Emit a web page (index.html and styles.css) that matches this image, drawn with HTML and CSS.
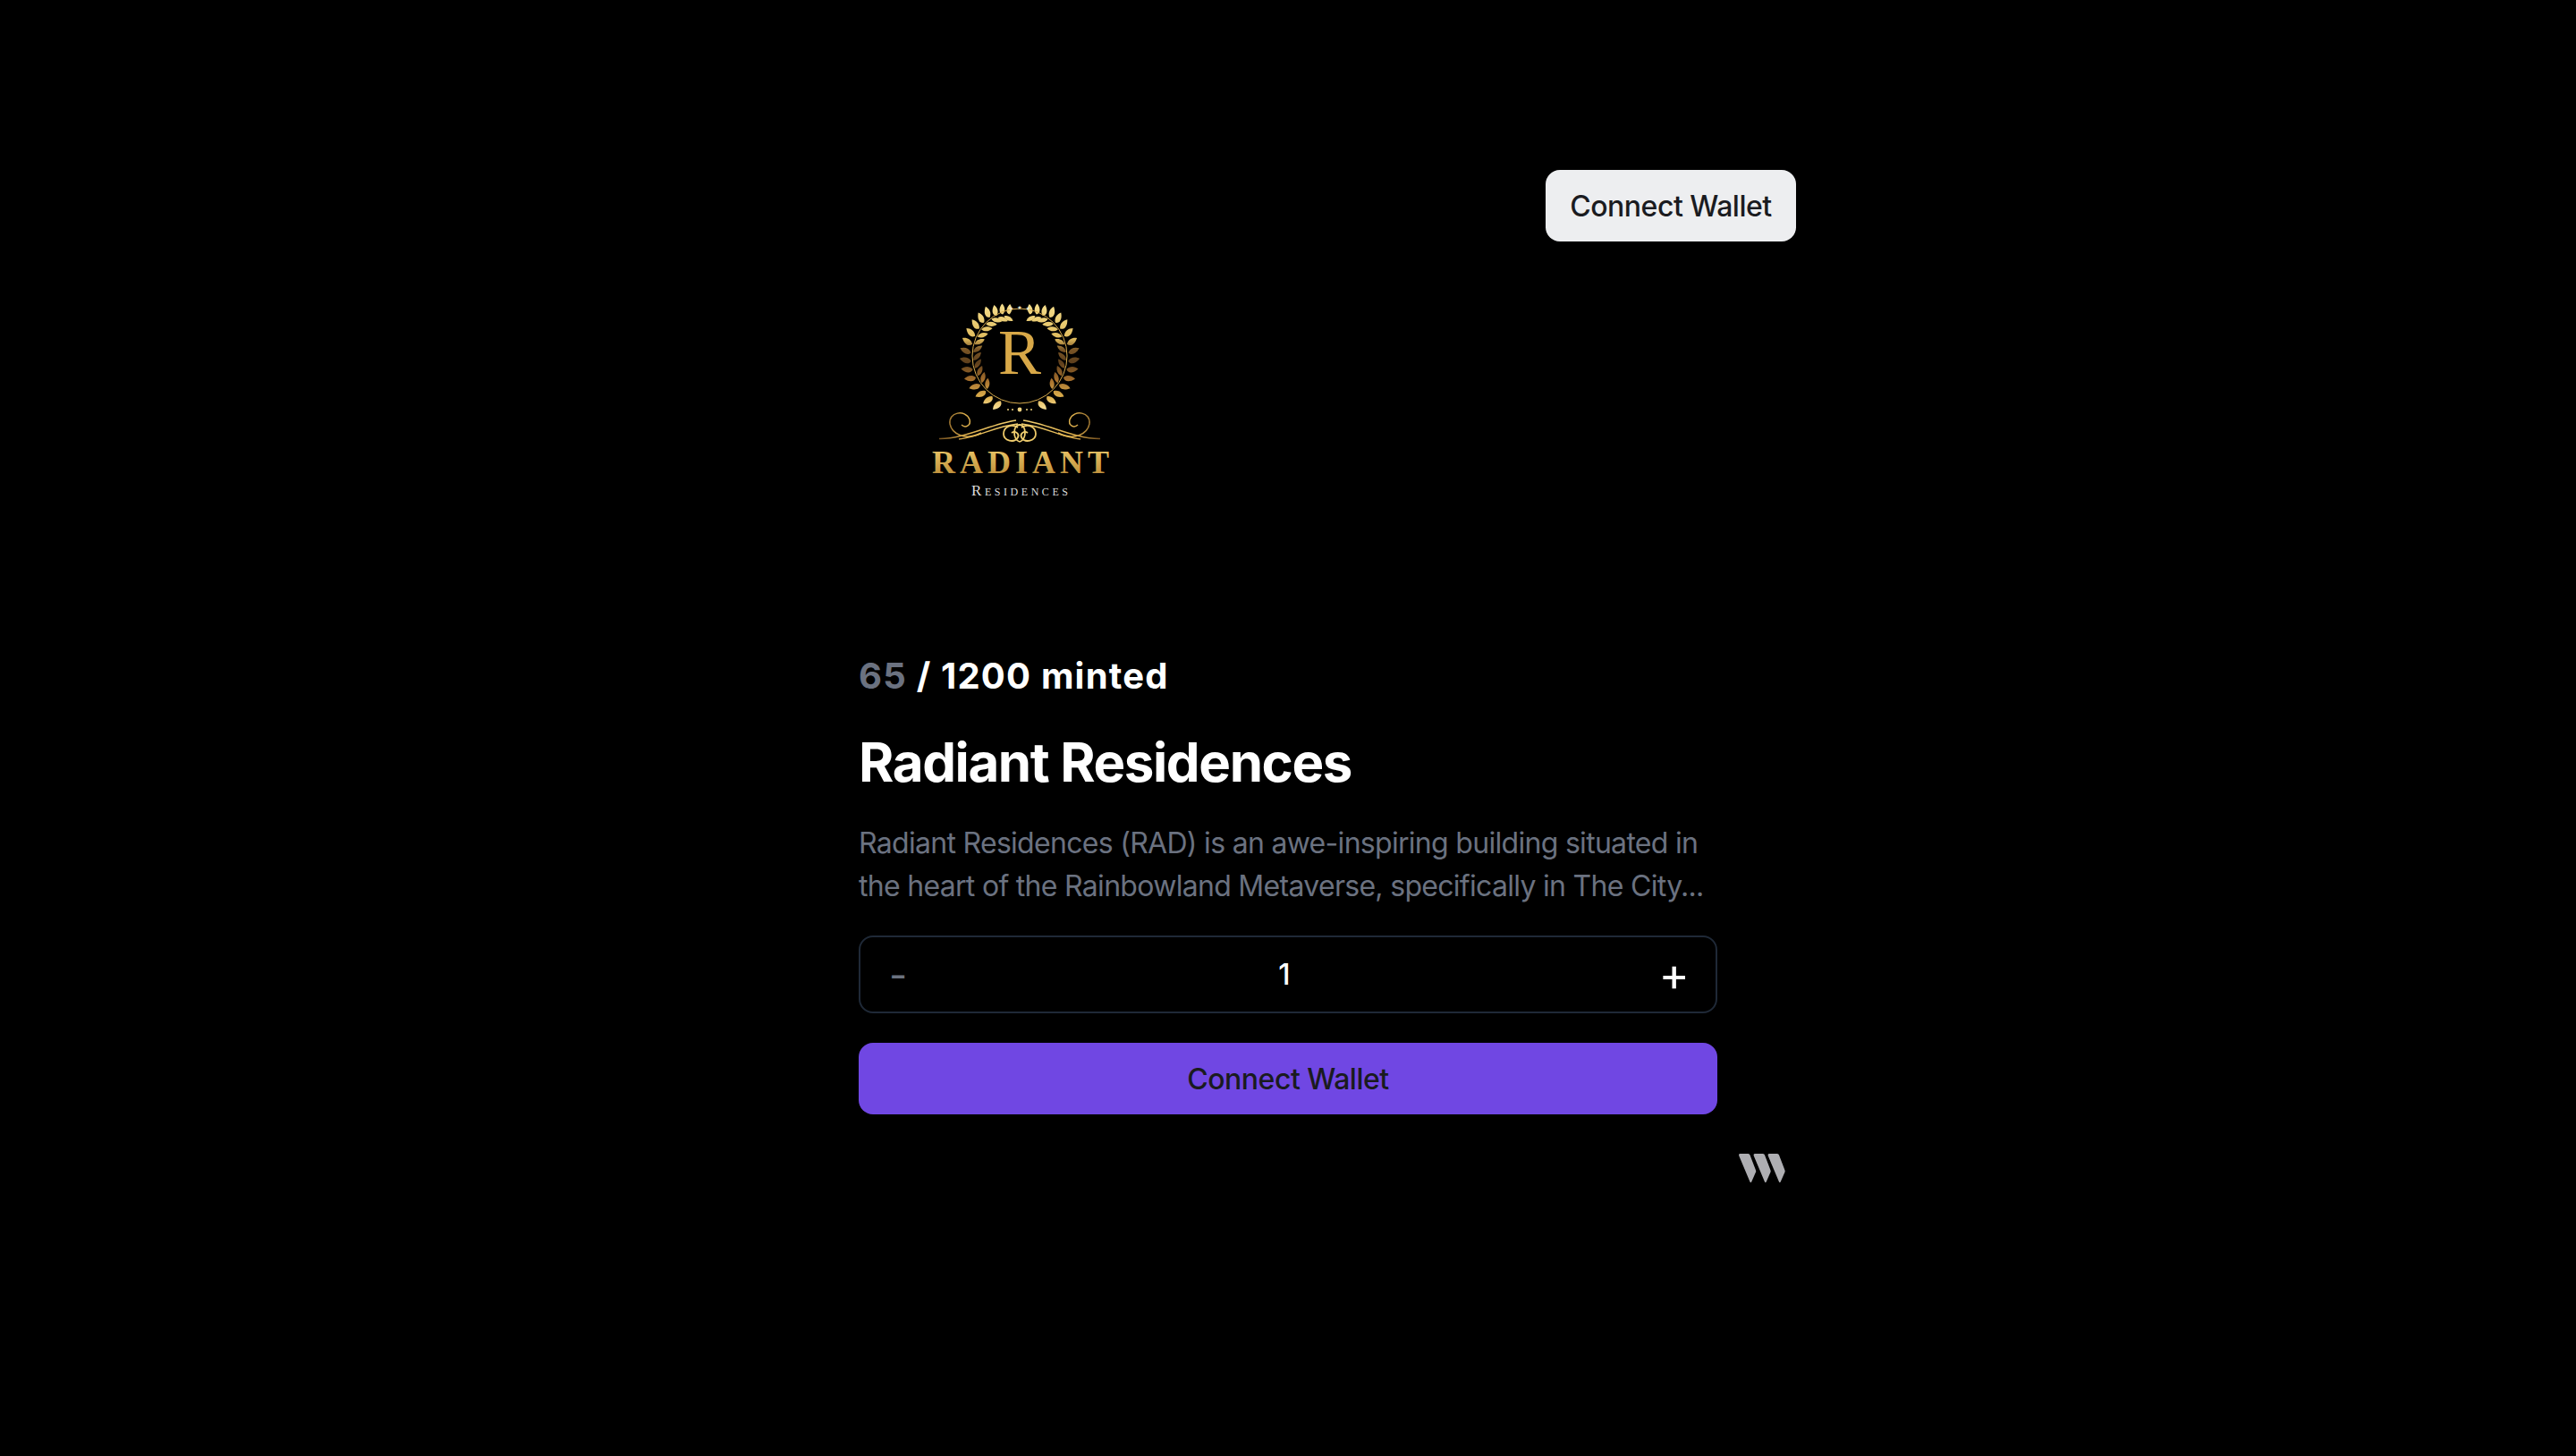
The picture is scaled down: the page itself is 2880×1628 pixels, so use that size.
FILE: index.html
```html
<!DOCTYPE html>
<html lang="en">
<head>
<meta charset="utf-8">
<title>Radiant Residences</title>
<link rel="stylesheet" href="styles.css">
</head>
<body>
<div class="page">
  <header class="topbar">
    <button class="wallet-btn">Connect Wallet</button>
  </header>
  <main class="claim">
    <svg class="logo" viewBox="0 0 360 360" width="360" height="360" role="img" aria-label="Radiant Residences logo">
      <defs>
        <linearGradient id="wreathGrad" gradientUnits="userSpaceOnUse" x1="0" y1="68" x2="0" y2="188">
          <stop offset="0" stop-color="#f6df8e"/>
          <stop offset=".34" stop-color="#e0bb5c"/>
          <stop offset=".44" stop-color="#7a5526"/>
          <stop offset=".56" stop-color="#5e3f1c"/>
          <stop offset=".72" stop-color="#a36d2c"/>
          <stop offset=".88" stop-color="#dcae4c"/>
          <stop offset="1" stop-color="#f8e29a"/>
        </linearGradient>
        <linearGradient id="flourishGrad" gradientUnits="userSpaceOnUse" x1="88" y1="0" x2="180" y2="0">
          <stop offset="0" stop-color="#6e4a1c"/>
          <stop offset=".35" stop-color="#dcae4c"/>
          <stop offset="1" stop-color="#f3d273"/>
        </linearGradient>
        <linearGradient id="wordGrad" gradientUnits="userSpaceOnUse" x1="0" y1="234" x2="0" y2="260">
          <stop offset="0" stop-color="#e6c264"/>
          <stop offset="1" stop-color="#c0913c"/>
        </linearGradient>
        <path id="outerLeaf" d="M0-54.500C-4-57.500-2.500-63 4-67 6-62.500 5-57 0-54.500Z"/>
        <path id="innerLeaf" d="M.5-52C5-52 8.500-48 8.500-42.500 3.500-43.500 .3-47 .5-52Z"/>
        <g id="leafPair"><use href="#outerLeaf"/><use href="#innerLeaf"/></g>
        <g id="branch">
          <use href="#outerLeaf" transform="rotate(-14) scale(.88)"/>
          <use href="#leafPair" transform="rotate(-22) scale(.92)"/>
          <use href="#leafPair" transform="rotate(-30) scale(.95)"/>
          <use href="#leafPair" transform="rotate(-38)"/>
          <use href="#leafPair" transform="rotate(-47)"/>
          <use href="#leafPair" transform="rotate(-56)"/>
          <use href="#leafPair" transform="rotate(-66)"/>
          <use href="#leafPair" transform="rotate(-76)"/>
          <use href="#leafPair" transform="rotate(-86)"/>
          <use href="#leafPair" transform="rotate(-96)"/>
          <use href="#leafPair" transform="rotate(-106)"/>
          <use href="#leafPair" transform="rotate(-116)"/>
          <use href="#leafPair" transform="rotate(-126)"/>
          <use href="#leafPair" transform="rotate(-136)"/>
          <use href="#outerLeaf" transform="rotate(-146)"/>
          <use href="#outerLeaf" transform="rotate(-157)"/>
        </g>
        <mask id="wreathMask" maskUnits="userSpaceOnUse" x="0" y="0" width="360" height="360">
          <g transform="translate(180 128)" fill="#fff">
            <use href="#branch"/>
            <use href="#branch" transform="scale(-1 1)"/>
          </g>
        </mask>
        <g id="flourishSide" fill="none" stroke="url(#flourishGrad)">
          <path stroke-width="1.600" d="M90 220.500C118 221 148 204 176 200"/>
          <path stroke-width="1.400" d="M112 221C135 219 150 207 178 204"/>
          <path stroke-width="1.500" d="M137 214C118 224 104 214 102 204C100 191 119 187 124 199C126 206 119 209 115 205"/>
          <path stroke-width="1.800" d="M178 208C170 203 162 208 162 215C162 223 174 226 178 219C180 215 175 211 171 214"/>
          <path stroke-width="1.800" d="M180 205C172 205 172 222 180 224"/>
        </g>
      </defs>
      <rect class="logo-wreath" width="360" height="360" mask="url(#wreathMask)"/>
      <circle class="logo-ring" cx="180" cy="128" r="53"/>
      <text class="logo-initial" x="180" y="148">R</text>
      <text class="logo-star" x="170.500" y="77">★</text>
      <text class="logo-star" x="180" y="76">★</text>
      <text class="logo-star" x="189.500" y="77">★</text>
      <g class="logo-dots">
        <circle cx="167" cy="188" r="1"/><circle cx="172" cy="188" r="1"/>
        <circle cx="180" cy="188" r="2.400"/>
        <circle cx="188" cy="188" r="1"/><circle cx="193" cy="188" r="1"/>
      </g>
      <use href="#flourishSide"/>
      <use href="#flourishSide" transform="translate(360 0) scale(-1 1)"/>
      <text class="logo-word" x="82" y="259" textLength="198" lengthAdjust="spacing">RADIANT</text>
      <text class="logo-sub" x="180" y="284" textLength="108" lengthAdjust="spacing">Residences</text>
    </svg>
    <p class="minted"><span class="minted-count">65</span> / 1200 minted</p>
    <h1 class="title">Radiant Residences</h1>
    <p class="desc">Radiant Residences (RAD) is an awe-inspiring building situated in the heart of the Rainbowland Metaverse, specifically in The City...</p>
    <div class="stepper">
      <button class="step step-minus">-</button>
      <span class="qty">1</span>
      <button class="step step-plus">+</button>
    </div>
    <button class="claim-btn">Connect Wallet</button>
  </main>
  <footer class="foot">
    <svg class="mark" viewBox="0 0 54 33" width="54" height="33" aria-hidden="true">
      <path id="markStrip" d="M1.500 0H10.500Q12 0 12.500 1.500L19 18.500Q19.500 20 18.800 21L14.200 31.500Q13.300 33 12.500 31.500L.3 2.500Q-.5 0 1.500 0Z"/>
      <use href="#markStrip" x="16.500"/>
      <use href="#markStrip" x="32.500"/>
    </svg>
  </footer>
</div>
</body>
</html>
```

FILE: styles.css
```css
* { box-sizing: border-box; }
html, body { margin: 0; background: #000; }
body {
  min-height: 1628px;
  font-family: Inter, "Liberation Sans", sans-serif;
  color: #fff;
}
button { font-family: inherit; border: 0; cursor: pointer; }
.page {
  width: 1136px;
  margin: 0 auto;
  padding-top: 190px;
}
.topbar { display: flex; justify-content: flex-end; }
.wallet-btn {
  width: 280px;
  height: 80px;
  padding: 0;
  border-radius: 16px;
  background: #edeef0;
  color: #1a1b1f;
  font-size: 32px;
  font-weight: 500;
  letter-spacing: -.5px;
}
.claim {
  display: flex;
  flex-direction: column;
  padding: 0 88px;
}
.logo { display: block; }
.logo-wreath { fill: url(#wreathGrad); }
.logo-ring { fill: none; stroke: #d7ab4e; stroke-width: 1; }
.logo-initial {
  font-family: "Liberation Serif", serif;
  font-size: 72px;
  fill: #d8a848;
  text-anchor: middle;
}
.logo-star {
  font-family: "DejaVu Sans", sans-serif;
  font-size: 6px;
  fill: #f1ecd8;
  text-anchor: middle;
}
.logo-dots { fill: #eed27f; }
.logo-word {
  font-family: "Liberation Serif", serif;
  font-size: 36px;
  font-weight: 700;
  fill: url(#wordGrad);
}
.logo-sub {
  font-family: "Liberation Serif", serif;
  font-size: 17px;
  font-variant: small-caps;
  fill: #dcdcdc;
  text-anchor: middle;
}
.minted {
  margin: 98px 0 0;
  font-size: 40px;
  line-height: 56px;
  font-weight: 700;
  letter-spacing: 1.200px;
}
.minted-count { color: #6b7280; }
.title {
  margin: 32px 0 0;
  font-size: 60px;
  line-height: 72px;
  font-weight: 700;
  letter-spacing: -1.400px;
}
.desc {
  margin: 31px 0 0;
  font-size: 32px;
  line-height: 48px;
  letter-spacing: -.7px;
  color: #6b7280;
}
.stepper {
  display: flex;
  align-items: center;
  height: 87px;
  margin-top: 31px;
  padding: 0 29px 0 32px;
  border: 2px solid #1f2937;
  border-radius: 16px;
}
.step {
  padding: 0;
  background: none;
  line-height: 48px;
}
.step-minus { color: #6b7280; font-size: 44px; }
.step-plus { color: #fff; font-size: 52px; }
.qty {
  flex: 1;
  text-align: center;
  font-size: 32px;
  line-height: 48px;
  font-weight: 500;
  padding-left: 3px;
}
.claim-btn {
  height: 80px;
  margin-top: 33px;
  border-radius: 16px;
  background: #7047e3;
  color: #1a1b1f;
  font-size: 32px;
  font-weight: 500;
  letter-spacing: -.5px;
}
.foot {
  display: flex;
  justify-content: flex-end;
  padding: 44px 10px 0 0;
}
.mark { display: block; fill: #aeaeb2; }
```
